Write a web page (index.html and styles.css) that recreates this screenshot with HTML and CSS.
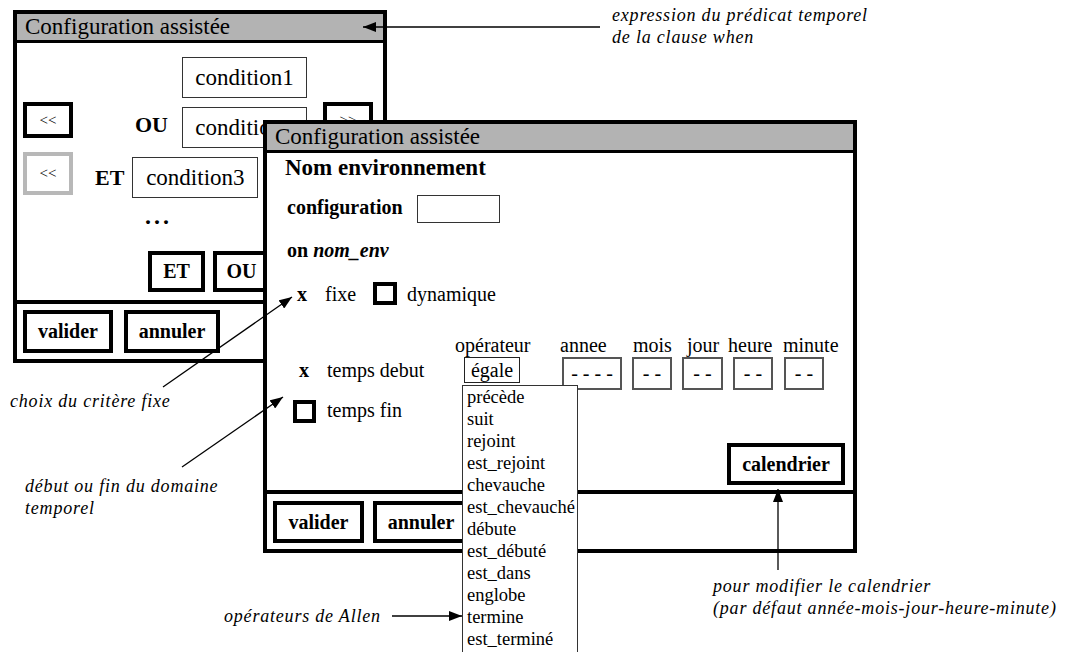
FILE: index.html
```html
<!DOCTYPE html>
<html lang="fr">
<head>
<meta charset="utf-8">
<title>Configuration assistée</title>
<link rel="stylesheet" href="styles.css">
</head>
<body>
<div class="canvas">
  <div class="win win1">
    <div class="title">Configuration assistée</div>
    <div class="body b1">
      <div class="r1"><div class="cond">condition1</div></div>
      <div class="r2">
        <div class="sbtn">&lt;&lt;</div>
        <b class="op ou">OU</b>
        <div class="cond c2">condition2</div>
        <div class="sbtn fwd">&gt;&gt;</div>
      </div>
      <div class="r3">
        <div class="sbtn grey">&lt;&lt;</div>
        <b class="op et">ET</b>
        <div class="cond c3">condition3</div>
      </div>
      <div class="dots">...</div>
      <div class="r5"><div class="btn small">ET</div><div class="btn small">OU</div></div>
    </div>
    <div class="foot f1"><div class="btn val1">valider</div><div class="btn ann1">annuler</div></div>
  </div>

  <div class="win win2">
    <div class="title">Configuration assistée</div>
    <div class="body b2">
      <div class="envname">Nom environnement</div>
      <div class="cfg"><b>configuration</b><div class="input"></div></div>
      <div class="on"><b>on <i>nom_env</i></b></div>
      <div class="fixe"><b>x</b><span class="fx">fixe</span><span class="cb cb-dyn"></span><span class="dyn">dynamique</span></div>
      <div class="time">
        <div class="tleft">
          <div class="trow1"><b>x</b><span class="tlab">temps debut</span></div>
          <div class="trow2"><span class="cb cb-fin"></span><span class="tlab2">temps fin</span></div>
        </div>
        <div class="fields">
          <div class="labels"><span>opérateur</span><span>annee</span><span>mois</span><span>jour</span><span>heure</span><span>minute</span></div>
          <div class="boxes">
            <div class="fbox op-box">égale</div>
            <div class="fbox dbox an">- - - -</div>
            <div class="fbox dbox mo">- -</div>
            <div class="fbox dbox jo">- -</div>
            <div class="fbox dbox he">- -</div>
            <div class="fbox dbox mi">- -</div>
          </div>
        </div>
      </div>
      <div class="cal-row"><div class="btn cal">calendrier</div></div>
    </div>
    <div class="foot f2"><div class="btn val2">valider</div><div class="btn ann2">annuler</div></div>
  </div>

  <ul class="menu">
    <li>précède</li>
    <li>suit</li>
    <li>rejoint</li>
    <li>est_rejoint</li>
    <li>chevauche</li>
    <li>est_chevauché</li>
    <li>débute</li>
    <li>est_débuté</li>
    <li>est_dans</li>
    <li>englobe</li>
    <li>termine</li>
    <li>est_terminé</li>
  </ul>

  <div class="note n-expr">expression du prédicat temporel<br>de la clause when</div>
  <div class="note n-choix">choix du critère fixe</div>
  <div class="note n-debut">début ou fin du domaine<br>temporel</div>
  <div class="note n-allen">opérateurs de Allen</div>
  <div class="note n-cal">pour modifier le calendrier<br>(par défaut année-mois-jour-heure-minute)</div>

  <svg class="arrows" width="1066" height="652" viewBox="0 0 1066 652">
    <defs>
      <marker id="ah" viewBox="0 0 13 10" refX="13" refY="5" markerWidth="13" markerHeight="10" orient="auto" markerUnits="userSpaceOnUse">
        <path d="M0 0L13 5L0 10z" fill="#000"/>
      </marker>
    </defs>
    <g stroke="#000" stroke-width="1.3" fill="none">
      <line x1="600" y1="27" x2="363" y2="27" marker-end="url(#ah)"/>
      <line x1="163" y1="387" x2="292" y2="297" marker-end="url(#ah)"/>
      <line x1="182" y1="467" x2="283" y2="397" marker-end="url(#ah)"/>
      <line x1="392" y1="616" x2="462" y2="616" marker-end="url(#ah)"/>
      <line x1="778" y1="570" x2="778" y2="489" marker-end="url(#ah)"/>
    </g>
  </svg>
</div>
</body>
</html>
```

FILE: styles.css
```css
* { box-sizing: border-box; }
html, body { margin: 0; padding: 0; overflow: hidden; }
body {
  width: 1066px;
  height: 652px;
  background: #fff;
  color: #000;
  font-family: "Liberation Serif", "Times New Roman", serif;
}
.canvas { position: relative; width: 1066px; height: 652px; }

.win {
  position: absolute;
  background: #fff;
  border: 4px solid #000;
  display: flex;
  flex-direction: column;
}
.win1 { left: 13px; top: 10px; width: 374px; height: 353px; z-index: 1; }
.win2 { left: 263px; top: 120px; width: 594px; height: 433px; z-index: 2; }

.title {
  height: 29px;
  flex: none;
  background: #b3b3b3;
  border-bottom: 3px solid #000;
  font-size: 23px;
  line-height: 26px;
  padding-left: 8px;
  white-space: nowrap;
  overflow: hidden;
}
.body { flex: none; border-bottom: 4px solid #000; overflow: hidden; }
.b1 { height: 261px; }
.b2 { height: 341px; }
.foot { flex: 1; display: flex; align-items: flex-start; }
.f1 { padding: 6px 0 0 6px; gap: 11px; }
.f2 { padding: 7px 0 0 6px; gap: 9px; }

.btn {
  border: 4px solid #000;
  font-weight: bold;
  font-size: 20px;
  display: flex;
  align-items: center;
  justify-content: center;
  white-space: nowrap;
  flex: none;
}
.val1 { width: 90px; height: 43px; }
.ann1 { width: 96px; height: 43px; }
.val2 { width: 91px; height: 42px; }
.ann2 { width: 96px; height: 42px; }
.small { width: 57px; height: 41px; }
.cal { width: 118px; height: 42px; }

/* window 1 */
.r1 { margin-top: 14px; padding-left: 165px; }
.cond {
  width: 125px;
  height: 41px;
  border: 1px solid #333;
  font-size: 23px;
  line-height: 39px;
  text-align: center;
  white-space: nowrap;
  overflow: hidden;
  flex: none;
}
.r2, .r3 { display: flex; align-items: flex-start; margin-top: 4px; padding-left: 6px; }
.sbtn {
  width: 50px;
  height: 36px;
  border: 4px solid #000;
  font-size: 15px;
  display: flex;
  align-items: center;
  justify-content: center;
  flex: none;
}
.sbtn.grey { border-color: #b8b8b8; height: 43px; }
.op { font-size: 22px; line-height: 26px; white-space: nowrap; }
.ou { margin: 10px 0 0 62px; }
.c2 { margin: 5px 0 0 14px; }
.fwd { margin-left: 16px; }
.et { margin: 13px 0 0 22px; }
.c3 { width: 126px; margin: 5px 0 0 8px; }
.dots { margin: 6px 0 0 128px; font-size: 24px; line-height: 24px; font-weight: bold; letter-spacing: 3px; }
.r5 { display: flex; gap: 8px; margin: 23px 0 0 131px; }

/* window 2 */
.envname { margin-top: 2px; padding-left: 18px; font-size: 23px; line-height: 26px; font-weight: bold; white-space: nowrap; }
.cfg { display: flex; align-items: flex-start; margin-top: 14px; padding-left: 20px; font-size: 20px; line-height: 24px; }
.input { width: 83px; height: 28px; margin-left: 14px; border: 1px solid #333; }
.on { margin-top: 15px; padding-left: 20px; font-size: 20px; line-height: 24px; }
.fixe { display: flex; align-items: flex-start; margin-top: 20px; padding-left: 30px; font-size: 20px; line-height: 24px; }
.fx { margin-left: 18px; }
.cb { border: 4px solid #000; flex: none; display: block; }
.cb-dyn { width: 24px; height: 23px; margin-left: 17px; }
.dyn { margin-left: 10px; }

.time { display: flex; margin-top: 27px; font-size: 20px; }
.tleft { width: 188px; flex: none; }
.trow1 { display: flex; margin-top: 25px; padding-left: 32px; line-height: 24px; }
.tlab { margin-left: 18px; }
.trow2 { display: flex; align-items: flex-start; margin-top: 18px; padding-left: 26px; line-height: 20px; }
.cb-fin { width: 23px; height: 23px; }
.tlab2 { margin-left: 11px; }

.labels { display: grid; grid-template-columns: 105px 73px 54px 41px 55px auto; line-height: 24px; white-space: nowrap; }
.boxes { display: flex; align-items: flex-start; }
.fbox { text-align: center; white-space: nowrap; flex: none; }
.op-box { width: 56px; height: 26px; margin-left: 9px; border: 1px solid #222; line-height: 24px; }
.dbox { height: 33px; border: 2px solid #555; line-height: 29px; width: 40px; margin-left: 10px; }
.an { width: 60px; margin-left: 42px; }
.jo { width: 41px; }
.mi { margin-left: 11px; }

.cal-row { display: flex; justify-content: flex-end; margin: 20px 8px 0 0; }

/* dropdown */
.menu {
  position: absolute;
  left: 462px;
  top: 385px;
  width: 116px;
  height: 280px;
  margin: 0;
  padding: 0 0 0 4px;
  list-style: none;
  background: #fff;
  border: 1px solid #333;
  border-bottom: none;
  font-size: 18.5px;
  line-height: 22px;
  z-index: 3;
  white-space: nowrap;
}

/* annotations */
.note {
  position: absolute;
  font-style: italic;
  font-size: 18px;
  line-height: 22px;
  letter-spacing: 0.8px;
  white-space: nowrap;
  z-index: 5;
}
.n-expr { left: 612px; top: 4px; }
.n-choix { left: 10px; top: 390px; }
.n-debut { left: 25px; top: 475px; }
.n-allen { left: 224px; top: 605px; }
.n-cal { left: 713px; top: 575px; }

.arrows { position: absolute; left: 0; top: 0; z-index: 6; pointer-events: none; }
```
